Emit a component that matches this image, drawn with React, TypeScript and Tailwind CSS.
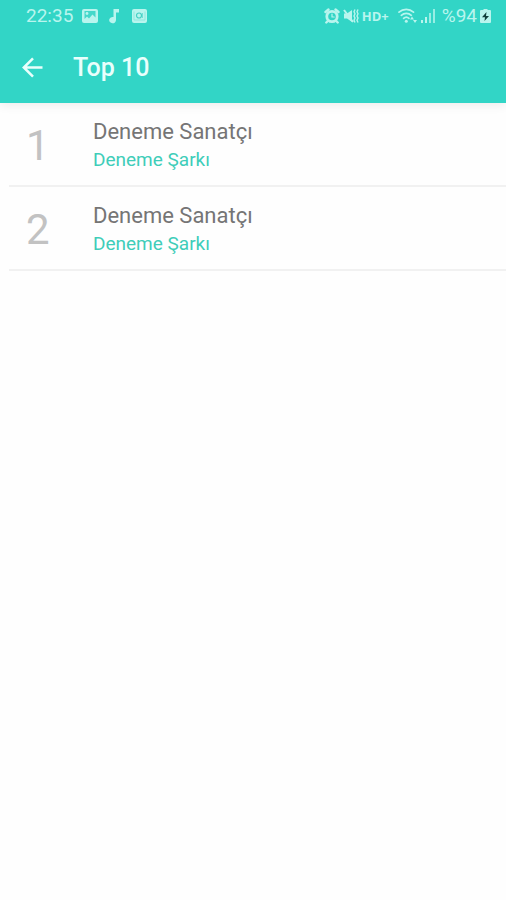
interface Track {
  rank: number
  artist: string
  song: string
}

const TRACKS: Track[] = [
  { rank: 1, artist: 'Deneme Sanatçı', song: 'Deneme Şarkı' },
  { rank: 2, artist: 'Deneme Sanatçı', song: 'Deneme Şarkı' },
]

function ImageIcon() {
  return (
    <svg width="16" height="16" viewBox="0 0 16 16" aria-hidden="true">
      <rect y="1" width="16" height="14" rx="2" fill="currentColor" />
      <path d="M2.5 3h11v6.5l-3-3-3.5 4-2-2-2.5 2.5z" fill="#45d8ca" />
      <circle cx="5" cy="5.5" r="1.4" fill="currentColor" />
    </svg>
  )
}

function NoteIcon() {
  return (
    <svg width="11" height="16" viewBox="0 0 11 16" fill="currentColor" aria-hidden="true">
      <path d="M4.5 1H10v3.5H7V12a3.4 3.2 0 1 1-2.5-3z" />
    </svg>
  )
}

function PlayerIcon() {
  return (
    <svg width="16" height="16" viewBox="0 0 16 16" aria-hidden="true">
      <rect x="1" y="1" width="15" height="14" rx="2" fill="currentColor" />
      <path d="M3 3.5V12h11V3.5" fill="none" stroke="#8fe8df" />
      <circle cx="8" cy="7.5" r="2.5" fill="none" stroke="#45d0c4" strokeWidth="1.2" />
      <path d="M11.5 5v5" stroke="#6fdfd5" />
    </svg>
  )
}

function AlarmIcon() {
  return (
    <svg width="16" height="16" viewBox="0 0 16 16" fill="none" stroke="currentColor" strokeLinecap="round" aria-hidden="true">
      <circle cx="8" cy="8.5" r="5.2" strokeWidth="2.8" />
      <path d="M1.5 4l3-2.5M14.5 4l-3-2.5M3.8 13l-1.5 1.5M12.2 13l1.5 1.5" strokeWidth="2.4" />
      <path d="M8 6v3h2.2" strokeWidth="1.2" />
    </svg>
  )
}

function VibrateIcon() {
  return (
    <svg width="16" height="16" viewBox="0 0 16 16" fill="none" stroke="currentColor" aria-hidden="true">
      <path d="M1 5.5h3L9 2v12l-5-3.500H1z" fill="currentColor" stroke="none" />
      <path d="M1 2l9 12" strokeWidth="2" />
      <path d="M12 1.5l-1 2.2 1 2.1-1 2.2 1 2.1-1 2.2 1 2.2M15 1.500l-1 2.200 1 2.100-1 2.200 1 2.100-1 2.200 1 2.200" strokeWidth="1.4" />
    </svg>
  )
}

function WifiIcon() {
  return (
    <svg width="20" height="16" viewBox="0 0 20 16" fill="none" stroke="currentColor" strokeLinecap="round" aria-hidden="true">
      <path d="M1 4.2a11 11 0 0 1 14.5 0M3.3 7.3a7.5 7.5 0 0 1 10 0M5.6 10.3a4 4 0 0 1 5.4 0" strokeWidth="1.7" />
      <circle cx="8.3" cy="13.3" r="1.5" fill="currentColor" stroke="none" />
      <path d="M14 8.5l2 3h-4zM17 15l-2-3h4z" fill="currentColor" stroke="none" />
    </svg>
  )
}

function SignalIcon() {
  return (
    <svg width="15" height="16" viewBox="0 0 15 16" fill="currentColor" aria-hidden="true">
      <path d="M0 12h2v3H0zM4 9h2v6H4z" />
      <path d="M8 5h2v10H8zM12 1h2v14h-2z" opacity=".75" />
    </svg>
  )
}

function BatteryIcon() {
  return (
    <svg width="11" height="16" viewBox="0 0 11 16" aria-hidden="true">
      <path d="M3.5 1h4v1H10a1 1 0 0 1 1 1v11a1 1 0 0 1-1 1H1a1 1 0 0 1-1-1V3a1 1 0 0 1 1-1h2.500z" fill="currentColor" />
      <path d="M6.5 4L2 9.200h3L4.500 13 9 8H6z" fill="#123f3b" />
    </svg>
  )
}

function StatusBar() {
  return (
    <div className="flex h-8 items-center justify-between pl-[26px] pr-[15px] text-[#b9f5ee]">
      <div className="flex items-center">
        <span className="text-[19px] leading-6">22:35</span>
        <div className="ml-[9px] flex items-center gap-[11px]">
          <ImageIcon />
          <NoteIcon />
          <PlayerIcon />
        </div>
      </div>
      <div className="flex items-center">
        <div className="flex items-center gap-[3px]">
          <AlarmIcon />
          <VibrateIcon />
          <span className="font-['Open_Sans',sans-serif] text-[13px] font-bold leading-4">HD+</span>
        </div>
        <div className="ml-[9px] flex items-center gap-[3px]">
          <WifiIcon />
          <SignalIcon />
        </div>
        <span className="ml-[6px] mr-[3px] text-[19px] leading-6">%94</span>
        <BatteryIcon />
      </div>
    </div>
  )
}

function TrackRow({ track }: { track: Track }) {
  return (
    <li className="ml-[9px] flex items-center border-b-2 border-[#f1f1f1] pb-[11px] pt-[15px]">
      <span className="w-[84px] pl-[17px] text-[42px] leading-[56px] text-[#c2c2c2]">{track.rank}</span>
      <div className="min-w-0 flex-1">
        <p className="truncate text-[22px] leading-7 text-[#757575]">{track.artist}</p>
        <p className="truncate text-[19px] leading-7 text-[#3fcdb9]">{track.song}</p>
      </div>
    </li>
  )
}

export default function App() {
  return (
    <div className="min-h-screen bg-[#fefefe] font-['Roboto',sans-serif]">
      <header className="bg-[#32d5c6] shadow-[0_2px_10px_rgba(0,0,0,0.08)]">
        <StatusBar />
        <div className="flex h-[71px] items-center pl-5 text-[#e9fffc]">
          <button type="button" aria-label="Back" className="cursor-pointer">
            <svg width="24" height="24" viewBox="0 0 24 24" fill="none" stroke="currentColor" strokeWidth="2.5" aria-hidden="true">
              <path d="M22.5 11.500H4M13 2.300L3.800 11.500l9.200 9.200" />
            </svg>
          </button>
          <h1 className="ml-[29px] text-[25px] font-medium leading-8">Top 10</h1>
        </div>
      </header>
      <main>
        <ol>
          {TRACKS.map(track => (
            <TrackRow key={track.rank} track={track} />
          ))}
        </ol>
      </main>
    </div>
  )
}
